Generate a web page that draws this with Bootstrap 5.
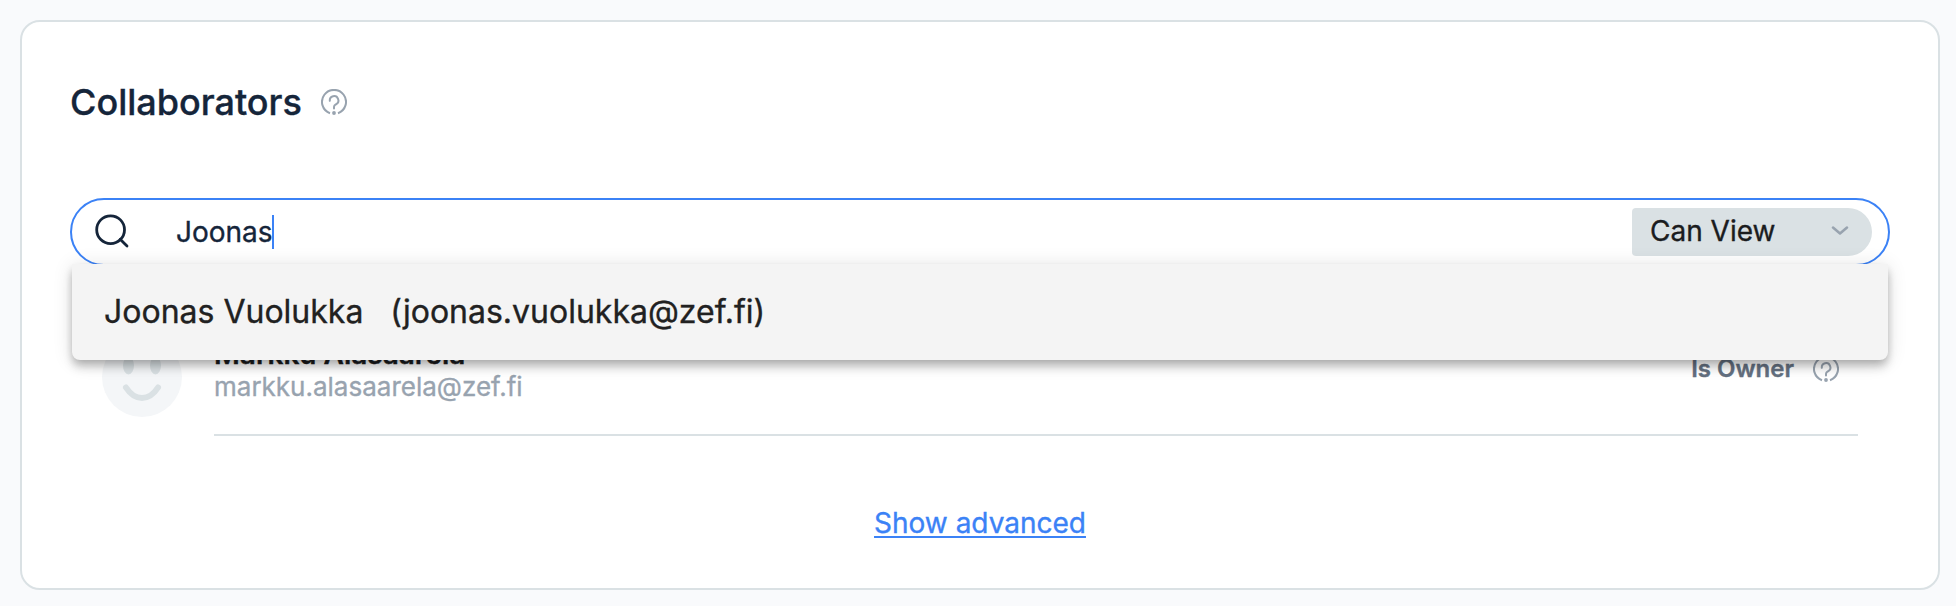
<!DOCTYPE html>
<html lang="en">
<head>
<meta charset="utf-8">
<meta name="viewport" content="width=device-width, initial-scale=1">
<title>Collaborators</title>
<link rel="stylesheet" href="https://cdn.jsdelivr.net/npm/bootstrap@5.3.0/dist/css/bootstrap.min.css">
<style>
  body { background: #f9fafc; color: #15253a; font-family: Inter, "Liberation Sans", sans-serif; font-size: 28px; line-height: 34px; -webkit-text-stroke: .35px currentColor; }
  .panel { margin: 20px 16px 0 20px; height: 570px; padding: 58px 48px 0; border: 2px solid #dae1e4; border-radius: 20px; background: #fff; }
  .panel-title { font-size: 36px; line-height: 44px; font-weight: 500; }
  .help { width: 26px; height: 26px; color: #98a3af; flex: none; }
  .heading { gap: 19px; }
  .search { height: 68px; margin-top: 74px; border: 2px solid #3b82f6; border-radius: 34px; padding: 0 16px 0 22px; }
  .query { margin-left: 46px; }
  .caret { width: 2px; height: 34px; margin-left: -1px; background: #3b82f6; }
  .role { width: 240px; height: 48px; padding: 0 23px 2px 18px; border-radius: 4px 24px 24px 4px; background: #dae1e4; color: #1b1c1e; }
  .suggest { top: 66px; left: 2px; right: 2px; height: 96px; padding: 0 32px; gap: 27px; border-radius: 0 0 8px 8px; background: #f4f4f4; color: #212121; font-size: 32px; z-index: 2;
    box-shadow: 0 4px 8px -2px rgba(0,0,0,.2), 0 8px 10px rgba(0,0,0,.14), 0 2px 20px rgba(0,0,0,.12); }
  .member { margin: 71px 32px 0; }
  .member-info { margin-left: 32px; height: 99px; border-bottom: 2px solid #dae1e4; }
  .member-name { font-weight: 600; color: #1b1c1e; line-height: 34px; }
  .member-mail { color: #98a3af; font-size: 26px; line-height: 32px; }
  .owner { font-size: 24px; font-weight: 600; color: #647080; margin: 15px 19px 0 0; gap: 19px; }
  .advanced { margin-top: 70px; }
  .advanced a { color: #3b82f6; text-decoration-thickness: 2px; text-underline-offset: 3px; text-decoration-skip-ink: none; }
</style>
</head>
<body>
<svg class="d-none">
  <symbol id="help" viewBox="0 0 26 26">
    <path d="M9 24.2A12 12 0 1 1 17 24.2" fill="none" stroke="currentColor" stroke-width="2"/>
    <path d="M8.800 11.800a4.300 4.300 0 1 1 6.500 3.300c-1.500 1-2.300 1.300-2.300 2.900v1.600" fill="none" stroke="currentColor" stroke-width="2" stroke-linecap="round"/>
    <circle cx="13" cy="24" r="1.900" fill="currentColor"/>
  </symbol>
</svg>
<main class="panel">
  <div class="heading d-flex align-items-center">
    <h1 class="panel-title mb-0">Collaborators</h1>
    <svg class="help"><use href="#help"/></svg>
  </div>
  <div class="position-relative">
    <div class="search d-flex align-items-center">
      <svg width="36" height="36" viewBox="0 0 36 36" fill="none" stroke="#15253a" stroke-width="2.800" stroke-linecap="round"><circle cx="16.600" cy="15.700" r="13.900"/><path d="M26.200 25.300L33 32"/></svg>
      <span class="query">Joonas</span><span class="caret"></span>
      <div class="role ms-auto d-flex align-items-center justify-content-between">
        <span>Can View</span>
        <svg width="18" height="10" viewBox="0 0 18 10" fill="none" stroke="#98a3af" stroke-width="2.500" stroke-linecap="round" stroke-linejoin="round"><path d="M2 1.500l7 6 7-6"/></svg>
      </div>
    </div>
    <div class="suggest position-absolute d-flex align-items-center">
      <span>Joonas Vuolukka</span><span>(joonas.vuolukka@zef.fi)</span>
    </div>
  </div>
  <div class="member d-flex">
    <svg width="80" height="80" viewBox="0 0 80 80" class="flex-shrink-0"><circle cx="40" cy="40" r="40" fill="#f4f6f8"/><g fill="#dae1e4"><ellipse cx="26.500" cy="28.500" rx="5.500" ry="9"/><ellipse cx="53.500" cy="28.500" rx="5.500" ry="9"/></g><path d="M24 50.500c9 14 23 14 32 0" fill="none" stroke="#dae1e4" stroke-width="6" stroke-linecap="round"/></svg>
    <div class="member-info flex-grow-1 d-flex justify-content-between align-items-start">
      <div>
        <div class="member-name">Markku Alasaarela</div>
        <div class="member-mail">markku.alasaarela@zef.fi</div>
      </div>
      <div class="owner d-flex align-items-center"><span>Is Owner</span><svg class="help"><use href="#help"/></svg></div>
    </div>
  </div>
  <div class="advanced text-center"><a href="#">Show advanced</a></div>
</main>
<script src="https://cdn.jsdelivr.net/npm/bootstrap@5.3.0/dist/js/bootstrap.bundle.min.js"></script>
</body>
</html>
